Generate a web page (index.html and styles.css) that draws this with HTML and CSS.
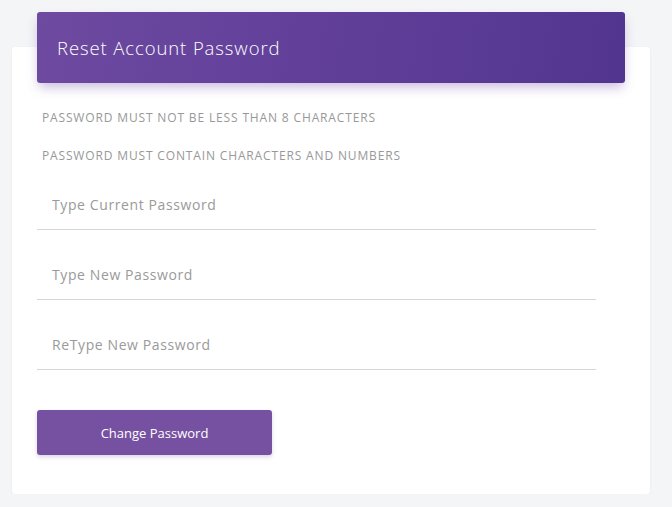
FILE: index.html
```html
<!DOCTYPE html>
<html>
<head>
<meta charset="utf-8">
<link rel="stylesheet" href="styles.css">
</head>
<body>
<div class="page">
  <div class="card">
    <div class="card-header">Reset Account Password</div>
    <div class="card-body">
      <p class="rule">PASSWORD MUST NOT BE LESS THAN 8 CHARACTERS</p>
      <p class="rule">PASSWORD MUST CONTAIN CHARACTERS AND NUMBERS</p>
      <form class="form">
        <input class="field" type="password" placeholder="Type Current Password">
        <input class="field" type="password" placeholder="Type New Password">
        <input class="field" type="password" placeholder="ReType New Password">
        <button class="btn" type="button">Change Password</button>
      </form>
    </div>
  </div>
</div>
</body>
</html>
```

FILE: styles.css
```css
* { box-sizing: border-box; }
html, body {
  margin: 0;
  padding: 0;
  background: #f4f5f7;
  font-family: "Open Sans", "Liberation Sans", sans-serif;
}
.page {
  padding: 47px 0 0 12px;
}
.card {
  width: 638px;
  height: 447px;
  background: #fff;
  border-radius: 3px;
  box-shadow: 0 1px 3px rgba(0,0,0,0.06);
  padding: 0 25px;
}
.card-header {
  position: relative;
  top: -35px;
  margin-bottom: -35px;
  height: 71px;
  border-radius: 3px;
  padding-left: 20px;
  line-height: 71px;
  font-size: 18.5px;
  font-weight: 300;
  letter-spacing: 0.9px;
  color: #fff;
  background: linear-gradient(100deg, #6e4aa0 0%, #62409a 45%, #52358f 100%);
  box-shadow: 0 6px 12px -2px rgba(100, 60, 160, 0.35);
}
.card-body {
  padding-top: 27px;
}
.rule {
  margin: 0 0 22px 5px;
  font-size: 12px;
  line-height: 16px;
  color: #989898;
  letter-spacing: 0.85px;
}
.form {
  display: flex;
  flex-direction: column;
  align-items: flex-start;
  margin-top: -6px;
}
.field {
  width: 559px;
  height: 50px;
  margin-bottom: 20px;
  border: 0;
  border-bottom: 1px solid #d6d6d6;
  padding: 0 15px;
  font-family: inherit;
  font-size: 14px;
  letter-spacing: 0.6px;
  color: #555;
  background: transparent;
  outline: none;
}
.field::placeholder {
  color: #9a9a9a;
}
.btn {
  margin-top: 20px;
  width: 235px;
  height: 45px;
  border: 0;
  border-radius: 3px;
  background: #7751a1;
  color: #fff;
  font-family: inherit;
  font-size: 13px;
  box-shadow: 0 2px 4px rgba(119, 81, 161, 0.25);
}
```
